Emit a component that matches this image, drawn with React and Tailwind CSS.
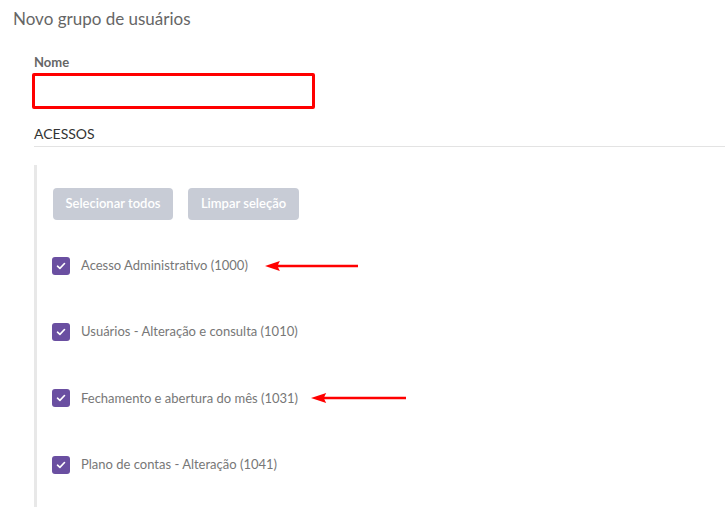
import React from "react";

const acessos = [
    { id: 1000, label: "Acesso Administrativo (1000)", arrow: "ml-[17px] w-[93px]" },
    { id: 1010, label: "Usuários - Alteração e consulta (1010)" },
    { id: 1031, label: "Fechamento e abertura do mês (1031)", arrow: "ml-[13px] w-[95px]" },
    { id: 1041, label: "Plano de contas - Alteração (1041)" },
];

const Arrow = ({ className }) => (
    <svg className={className} height="10" viewBox="0 0 100 10" preserveAspectRatio="none">
        <polygon points="0,5 16,0 14,3.8 100,3.8 100,6.2 14,6.2 16,10" fill="#ff0000" />
    </svg>
);

const App = () => {
    return (
        <div className="w-full h-[507px] bg-white overflow-hidden font-['Lato','Liberation_Sans',sans-serif]">
            <h2 className="pl-[13px] pt-[7px] text-[17px] leading-[24px] text-[#666]">Novo grupo de usuários</h2>

            <div className="pl-[32px] pt-[23px]">
                <label className="block pl-[2px] text-[13px] leading-[17px] font-bold text-[#666]">Nome</label>
                <input
                    type="text"
                    className="mt-[2px] block w-[283px] h-[36px] border-[3px] border-[#ff0000] rounded-[2px] outline-none"
                />

                <div className="ml-[2px] mt-[15px] pb-[3px] border-b border-[#e3e3e3] text-[14px] leading-[19px] text-[#333]">
                    ACESSOS
                </div>

                <div className="ml-[2px] mt-[18px] border-l-[3px] border-[#e8e8e8] pl-[15px] pt-[23px] h-[400px]">
                    <div className="flex gap-[15px]">
                        <button className="w-[120px] h-[32px] ml-[1px] rounded-[4px] bg-[#c8ccd6] text-white text-[13px] font-semibold">
                            Selecionar todos
                        </button>
                        <button className="w-[111px] h-[32px] rounded-[4px] bg-[#c8ccd6] text-white text-[13px] font-semibold">
                            Limpar seleção
                        </button>
                    </div>

                    <div className="mt-[36px] flex flex-col gap-[47.4px]">
                        {acessos.map((a) => (
                            <div key={a.id} className="relative flex items-center h-[19px]">
                                <span className="w-[18px] h-[18px] rounded-[3px] bg-[#6a4fa1] flex items-center justify-center">
                                    <svg width="10" height="8" viewBox="0 0 10 8">
                                        <path d="M1.5 4.2 L3.9 6.4 L8.5 1.5" stroke="white" strokeWidth="1.6" fill="none" strokeLinecap="round" strokeLinejoin="round" />
                                    </svg>
                                </span>
                                <span className="ml-[11px] text-[13px] text-[#777]">{a.label}</span>
                                {a.arrow && <Arrow className={a.arrow} />}
                            </div>
                        ))}
                    </div>
                </div>
            </div>
        </div>
    );
};

export default App;
